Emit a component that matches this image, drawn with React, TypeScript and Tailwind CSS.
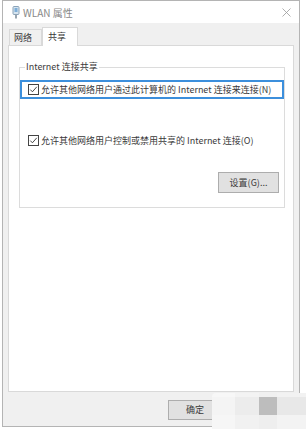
import React from 'react'

const font = { fontFamily: '"Noto Sans CJK SC", "Noto Sans", sans-serif' }

function Check() {
  return (
    <svg width="11" height="11" viewBox="0 0 11 11" className="shrink-0">
      <rect x="0.5" y="0.5" width="10" height="10" fill="white" stroke="#444" />
      <path d="M2.3 5.6 L4.4 7.8 L8.8 2.8" fill="none" stroke="#333" strokeWidth="0.9" />
    </svg>
  )
}

function AdapterIcon() {
  return (
    <svg width="8" height="13" viewBox="0 0 8 13">
      <rect x="1" y="0.5" width="6" height="8" rx="1" fill="#d6e4ef" stroke="#8aa3b8" />
      <rect x="2.5" y="2" width="3" height="4" fill="#7eaed8" />
      <rect x="3" y="8.5" width="2" height="4" fill="#98a4ae" />
    </svg>
  )
}

export default function App() {
  return (
    <div className="relative w-[306px] h-[429px] bg-white overflow-hidden text-[9px] text-[#3a3a3a]" style={font}>
      <div className="ml-[2px] w-[298px] h-[427px] border border-[#b4b4b4] bg-[#f0f0f0] flex flex-col">
        {/* title bar */}
        <div className="h-[22px] bg-white flex items-center pl-[9px] pr-[7px]">
          <AdapterIcon />
          <span className="ml-[3px] text-[10px] text-[#888]">WLAN 属性</span>
          <svg width="9" height="9" viewBox="0 0 9 9" className="ml-auto mr-[1px]">
            <path d="M0.5 0.5 L8.5 8.5 M8.5 0.5 L0.5 8.5" stroke="#999" strokeWidth="0.8" />
          </svg>
        </div>

        {/* tabs */}
        <div className="h-[22px] flex items-end pl-[6px]">
          <div className="h-[16px] w-[33px] border border-b-0 border-[#d9d9d9] bg-[#f0f0f0] flex items-center pl-[4px]">
            网络
          </div>
          <div className="relative z-10 h-[19px] w-[36px] -mb-[1px] border border-b-0 border-[#d9d9d9] bg-white flex items-center pl-[5px]">
            共享
          </div>
        </div>

        {/* panel */}
        <div className="ml-[5px] w-[286px] h-[347px] border border-[#d9d9d9] bg-white">
          <div className="relative ml-[10px] mt-[21px] w-[266px] h-[141px] border border-[#dcdcdc] flex flex-col">
            <span className="absolute left-[5px] -top-[7px] bg-white px-[1px] leading-[12px]">
              Internet 连接共享
            </span>
            <div className="mt-[12px] h-[19px] border-[2px] border-[#3c8fdc] flex items-center pl-[6px] gap-[2px]">
              <Check />
              <span className="whitespace-nowrap">允许其他网络用户通过此计算机的 Internet 连接来连接(N)</span>
            </div>
            <div className="mt-[32px] h-[19px] flex items-center pl-[8px] gap-[2px]">
              <Check />
              <span className="whitespace-nowrap">允许其他网络用户控制或禁用共享的 Internet 连接(O)</span>
            </div>
            <div className="mt-[22px] flex justify-end pr-[5px]">
              <div className="w-[61px] h-[21px] border border-[#adadad] bg-[#e1e1e1] flex items-center justify-center">
                设置(G)...
              </div>
            </div>
          </div>
        </div>

        {/* footer */}
        <div className="flex-1 flex items-start pt-[8px] pl-[165px]">
          <div className="w-[54px] h-[20px] border border-[#adadad] bg-[#e1e1e1] flex items-center justify-center">
            确定
          </div>
        </div>
      </div>

      {/* mosaic watermark over the lower right corner */}
      <div className="absolute left-[212px] top-[393px] w-[94px] h-[36px] grid grid-cols-[23px_24px_18px_29px] grid-rows-[4px_18px_14px]">
        <div className="bg-[#f7f7f7] rounded-tl-[14px]" />
        <div className="bg-[#f3f3f3]" />
        <div className="bg-[#f0f0f0]" />
        <div className="bg-[#f2f2f2]" />
        <div className="bg-[#f4f4f4]" />
        <div className="bg-[#ececec]" />
        <div className="bg-[#bdbdbd]" />
        <div className="bg-[#e8e8e8]" />
        <div className="bg-[#f6f6f6]" />
        <div className="bg-[#f1f1f1]" />
        <div className="bg-[#eeeeee]" />
        <div className="bg-[#f3f3f3]" />
      </div>
    </div>
  )
}
